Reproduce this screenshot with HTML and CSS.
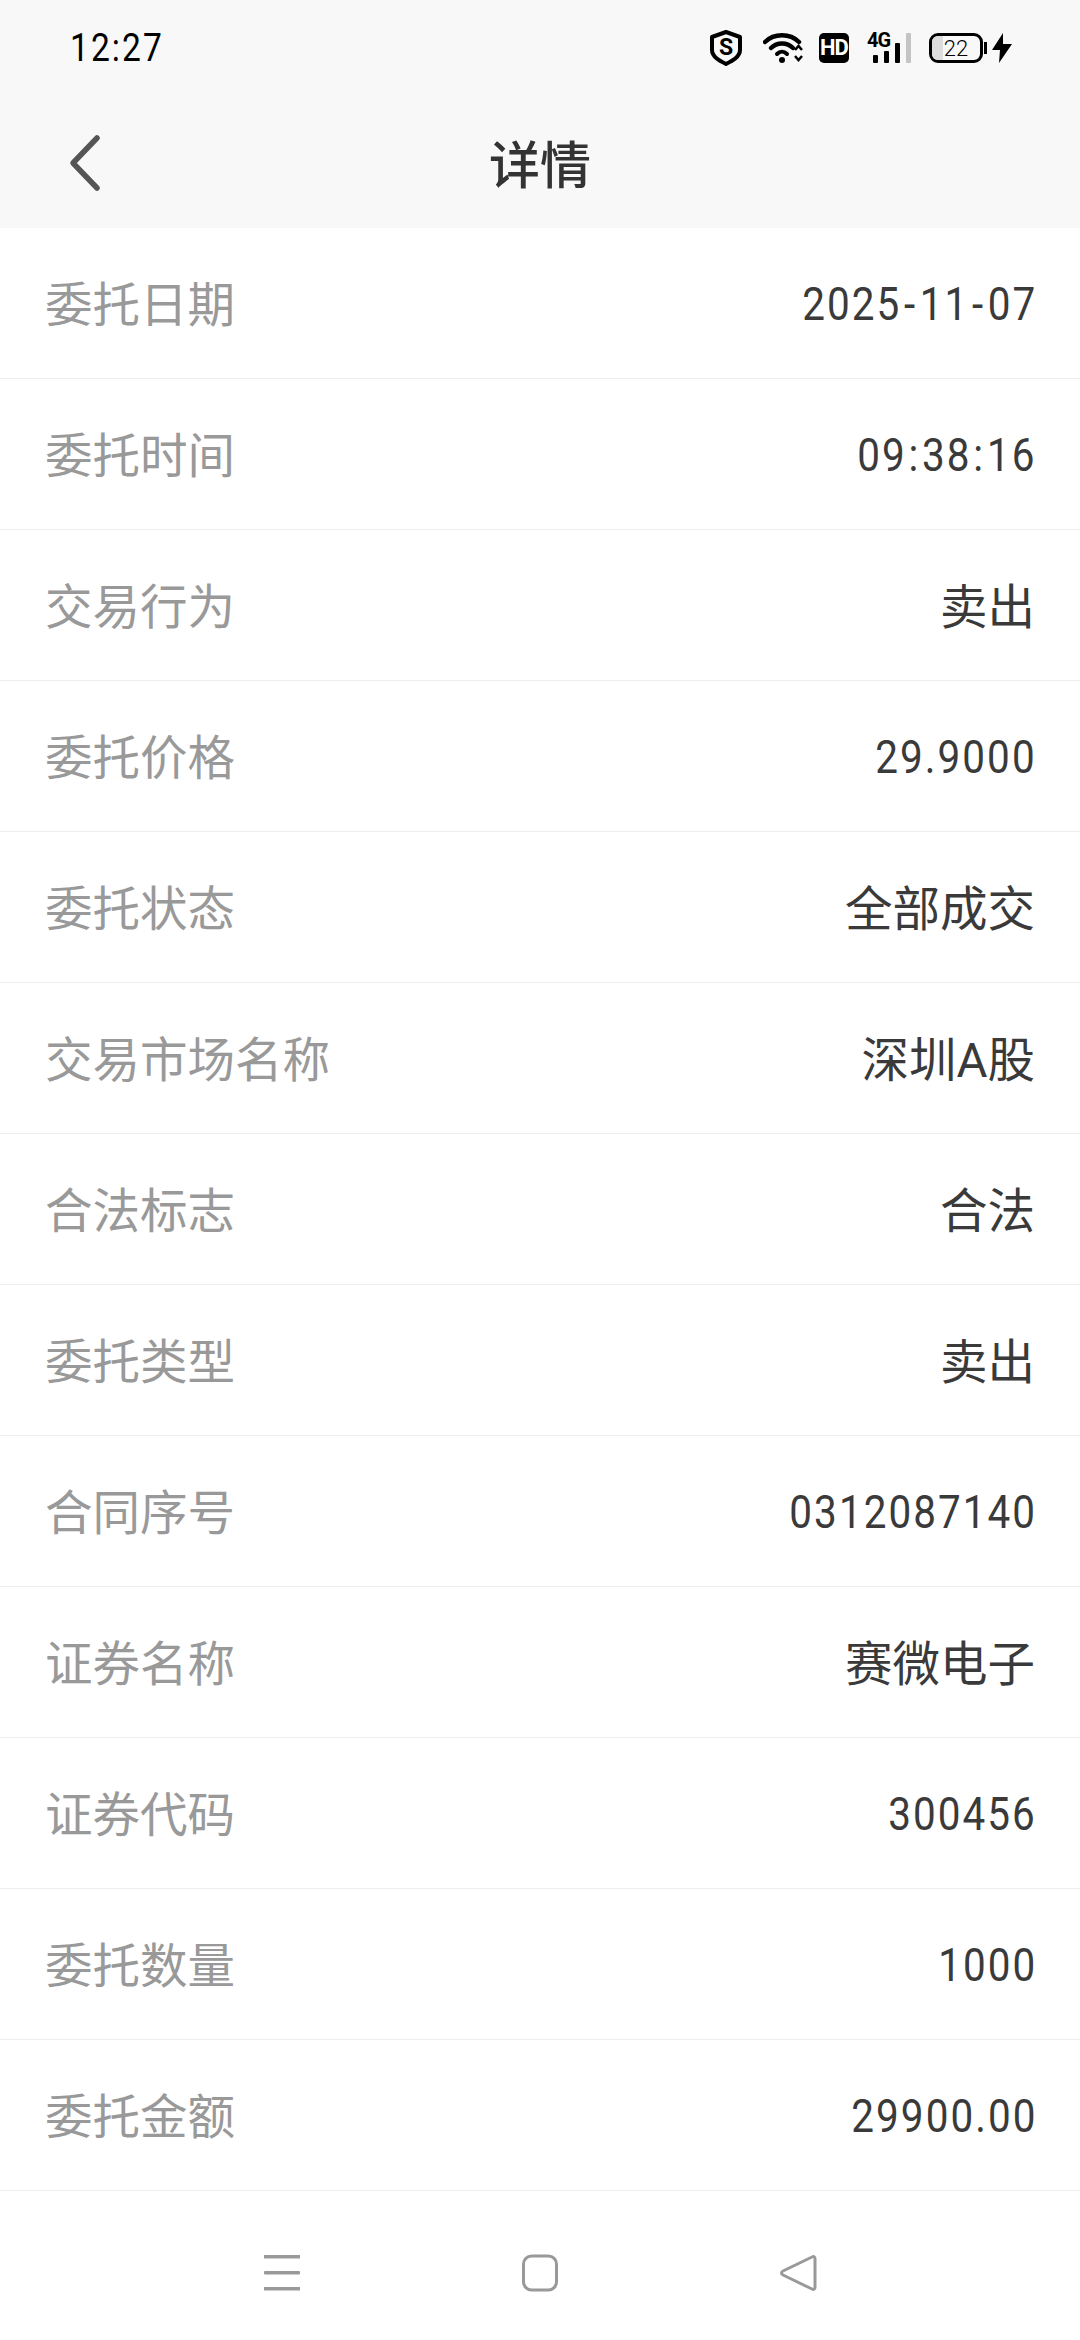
FILE: index.html
```html
<!DOCTYPE html>
<html>

<head>
    <meta charset="utf-8">
    <link rel="stylesheet" href="styles.css">
</head>

<body>
    <div class="top">
        <div class="status">
            <span class="clock">12:27</span>
            <div class="status-icons">
                <svg class="ic-shield" width="32" height="36" viewBox="0 0 32 36">
                    <path d="M16 2 L30 7 V20 C30 27 22 31 16 34 C10 31 2 27 2 20 V7 Z" fill="none" stroke="#000" stroke-width="4" stroke-linejoin="round"/>
                    <text x="16" y="25" text-anchor="middle" class="svg-s">S</text>
                </svg>
                <svg class="ic-wifi" width="40" height="30" viewBox="0 0 40 30">
                    <path d="M2 9 C11 0 27 0 36 9" fill="none" stroke="#000" stroke-width="4.500" stroke-linecap="round"/>
                    <path d="M8 15 C14 9 24 9 30 15" fill="none" stroke="#000" stroke-width="4.500" stroke-linecap="round"/>
                    <path d="M14 21 C17 18 21 18 24 21" fill="none" stroke="#000" stroke-width="4" stroke-linecap="round"/>
                    <circle cx="19" cy="27" r="3"/>
                    <path d="M32 17 L35.500 13 L39 17 M32 23 L35.500 27 L39 23" fill="none" stroke="#000" stroke-width="2.500"/>
                </svg>
                <div class="ic-hd">HD</div>
                <svg class="ic-net" width="44" height="36" viewBox="0 -6 44 36">
                    <text x="0" y="14" class="svg-4g">4G</text>
                    <rect x="6" y="22" width="5" height="8" rx="1"/>
                    <rect x="17" y="18" width="5" height="12" rx="1"/>
                    <rect x="28" y="10" width="5" height="20" rx="1"/>
                    <rect x="39" y="0" width="5" height="30" rx="1" fill="#c4c4c4"/>
                </svg>
                <div class="ic-batt">
                    <div class="batt-body">
                        <span class="batt-fill"></span>
                        <span class="batt-num">22</span>
                    </div>
                    <span class="batt-tip"></span>
                </div>
                <svg class="ic-bolt" width="20" height="30" viewBox="0 0 20 30">
                    <path d="M11 0 L0 17 H8 L7 30 L20 11 H11 Z"/>
                </svg>
            </div>
        </div>
        <div class="toolbar">
            <svg class="back" width="34" height="58" viewBox="0 0 34 58">
                <path d="M29 4 L5 29 L29 54" fill="none" stroke="#555" stroke-width="5.500" stroke-linecap="round" stroke-linejoin="round"/>
            </svg>
            <h1 class="title">详情</h1>
        </div>
    </div>

    <div class="list">
        <div class="row"><span class="key">委托日期</span><span class="val num">2025<span class="dash">-</span>11<span class="dash">-</span>07</span></div>
        <div class="row"><span class="key">委托时间</span><span class="val num">09<span class="colon">:</span>38<span class="colon">:</span>16</span></div>
        <div class="row"><span class="key">交易行为</span><span class="val">卖出</span></div>
        <div class="row"><span class="key">委托价格</span><span class="val num">29.9000</span></div>
        <div class="row"><span class="key">委托状态</span><span class="val">全部成交</span></div>
        <div class="row"><span class="key">交易市场名称</span><span class="val">深圳A股</span></div>
        <div class="row"><span class="key">合法标志</span><span class="val">合法</span></div>
        <div class="row"><span class="key">委托类型</span><span class="val">卖出</span></div>
        <div class="row"><span class="key">合同序号</span><span class="val num">0312087140</span></div>
        <div class="row"><span class="key">证券名称</span><span class="val">赛微电子</span></div>
        <div class="row"><span class="key">证券代码</span><span class="val num">300456</span></div>
        <div class="row"><span class="key">委托数量</span><span class="val num">1000</span></div>
        <div class="row"><span class="key">委托金额</span><span class="val num">29900.00</span></div>
    </div>

    <div class="nav">
        <svg width="38" height="38" viewBox="0 0 38 38">
            <rect x="1" y="1" width="36" height="3.500" fill="#999"/>
            <rect x="1" y="17" width="36" height="3.500" rx="1" fill="#999"/>
            <rect x="1" y="33" width="36" height="3.500" fill="#999"/>
        </svg>
        <svg width="38" height="38" viewBox="0 0 38 38">
            <rect x="2.500" y="2" width="33" height="34" rx="8" fill="none" stroke="#999" stroke-width="3"/>
        </svg>
        <svg width="38" height="38" viewBox="0 0 38 38">
            <path d="M33 3 C35 2 36 3 36 5 V33 C36 35 35 36 33 35 L4 21 C2 20 2 18 4 17 Z" fill="none" stroke="#999" stroke-width="3" stroke-linejoin="round"/>
        </svg>
    </div>
</body>

</html>
```

FILE: styles.css
```css
* {
    box-sizing: border-box;
}

html,
body {
    margin: 0;
    padding: 0;
}

body {
    width: 1080px;
    height: 2340px;
    background-color: #fff;
    font-family: "Roboto", "Noto Sans CJK SC", sans-serif;
    display: flex;
    flex-direction: column;
}

.top {
    background-color: #f8f8f8;
    height: 228px;
}

.status {
    height: 96px;
    padding: 0 68px 0 70px;
    display: flex;
    align-items: center;
    justify-content: space-between;
}

/* no DIN font here, so roboto gets squeezed to the same digit shape */
.clock {
    display: inline-block;
    font-size: 39px;
    letter-spacing: 2.400px;
    color: #000;
    transform: scaleX(.86);
    transform-origin: left center;
}

.status-icons {
    display: flex;
    align-items: center;
}

.ic-wifi {
    margin-left: 21px;
}

.ic-hd {
    margin-left: 16px;
    width: 30px;
    height: 30px;
    border-radius: 5px;
    background-color: #000;
    color: #fff;
    font-size: 22px;
    font-weight: 700;
    line-height: 30px;
    text-align: center;
    letter-spacing: -1px;
}

.ic-net {
    margin-left: 18px;
    margin-bottom: 6px;
}

.ic-batt {
    margin-left: 18px;
    display: flex;
    align-items: center;
}

.batt-body {
    position: relative;
    width: 54px;
    height: 30px;
    border: 3px solid #000;
    border-radius: 9px;
    display: flex;
    align-items: center;
    justify-content: center;
}

.batt-fill {
    position: absolute;
    left: 0;
    top: 0;
    bottom: 0;
    width: 11px;
    background-color: #ddd;
    border-radius: 6px 0 0 6px;
}

.batt-num {
    position: relative;
    font-size: 22px;
    font-weight: 300;
    color: #000;
}

.batt-tip {
    width: 3px;
    height: 12px;
    background-color: #000;
    margin-left: 1px;
}

.ic-bolt {
    margin-left: 5px;
}

.svg-s {
    font-size: 23px;
    font-weight: 700;
    font-family: "Roboto", sans-serif;
}

.svg-4g {
    font-size: 20px;
    font-weight: 700;
    font-family: "Roboto", sans-serif;
    letter-spacing: -1px;
}

.toolbar {
    height: 132px;
    padding-top: 9px;
    position: relative;
    display: flex;
    align-items: center;
    justify-content: center;
}

.back {
    position: absolute;
    left: 68px;
    top: 38px;
}

.title {
    margin: 0;
    font-size: 51px;
    font-weight: 500;
    color: #333;
    line-height: 1;
}

.row {
    height: 151px;
    padding: 0 45px 3px 45px;
    border-bottom: 1px solid #eee;
    display: flex;
    align-items: center;
    justify-content: space-between;
}

.key {
    font-size: 47.5px;
    color: #999;
}

.val {
    font-size: 47.5px;
    color: #3a3a3a;
}

.num {
    display: inline-block;
    font-size: 47px;
    letter-spacing: 2.400px;
    margin-right: -2px;
    padding-top: 3px;
    transform: scaleX(.86);
    transform-origin: right center;
}

.dash {
    margin: 0 3px;
}

.colon {
    margin: 0 2px;
}

.nav {
    flex: 1;
    padding: 63px 263px 0 263px;
    display: flex;
    align-items: flex-start;
    justify-content: space-between;
}
```
